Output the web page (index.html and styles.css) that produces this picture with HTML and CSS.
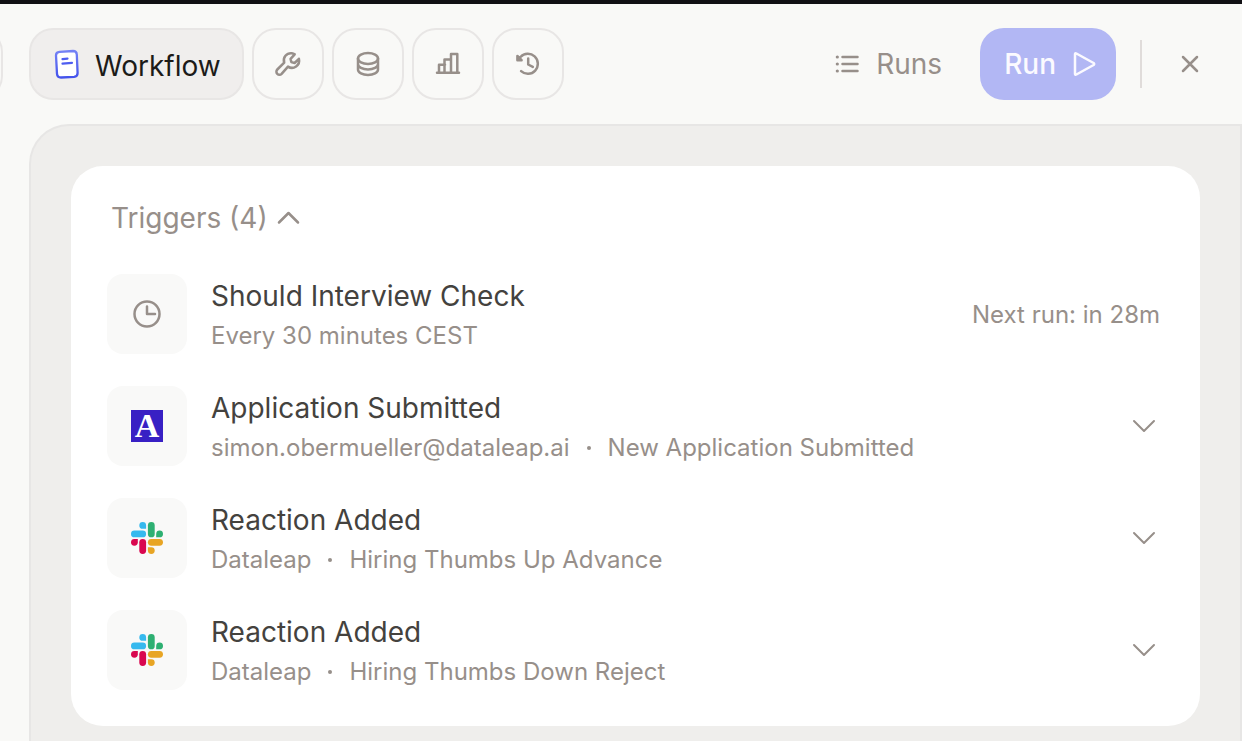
FILE: index.html
```html
<!DOCTYPE html>
<html lang="en">
<head>
<meta charset="utf-8">
<title>Workflow</title>
<link rel="stylesheet" href="styles.css">
</head>
<body>
<svg class="defs" width="0" height="0" aria-hidden="true">
  <symbol id="chevron" viewBox="0 0 24 24"><path d="M2 7 12 17 22 7"/></symbol>
  <symbol id="slack" viewBox="0 0 32 32">
    <g fill="#36b9ee"><path d="M11.700 0a3.400 3.400 0 0 1 3.400 3.400v3.400h-3.400a3.400 3.400 0 0 1 0-6.800z"/><rect y="8.500" width="15.100" height="6.800" rx="3.400"/></g>
    <g fill="#2eb072"><rect x="16.900" width="6.800" height="15.300" rx="3.400"/><path d="M32 11.900a3.400 3.400 0 0 1-3.400 3.400h-3.400v-3.400a3.400 3.400 0 0 1 6.800 0z"/></g>
    <g fill="#e8a524"><rect x="16.900" y="16.900" width="15.100" height="6.800" rx="3.400"/><path d="M20.300 32a3.400 3.400 0 0 1-3.400-3.400v-3.400h3.400a3.400 3.400 0 0 1 0 6.800z"/></g>
    <g fill="#d9074f"><rect x="8.300" y="16.900" width="6.800" height="15.100" rx="3.400"/><path d="M0 20.300a3.400 3.400 0 0 1 3.400-3.400h3.400v3.400a3.400 3.400 0 0 1-6.800 0z"/></g>
  </symbol>
</svg>
<header class="topbar">
  <div class="peek"><button class="tab" type="button" aria-label="Previous"></button></div>
  <nav class="tabs">
    <button class="tab tab-active" type="button">
      <svg class="doc-icon" width="28" height="32" viewBox="0 0 28 32">
        <defs><linearGradient id="ink" x1="0" y1="0" x2="0" y2="1"><stop offset="0" stop-color="#7482f5"/><stop offset="1" stop-color="#4453ec"/></linearGradient></defs>
        <path d="M6.500 3.800 20 3q3.600 0 3.800 3.500L24.600 25q0 3.500-3.500 3.800L8 29.500q-3.700 0-4-3.600L3 7.500q0-3.500 3.500-3.700z" fill="#fff" stroke="url(#ink)" stroke-width="2.300"/>
        <path d="M9.500 11.200 14.500 10.700M9.500 15.600 19 14.900" fill="none" stroke="#4e5df0" stroke-width="2.200" stroke-linecap="round"/>
      </svg>
      <span>Workflow</span>
    </button>
    <button class="tab" type="button" aria-label="Tools">
      <svg class="line" width="28" height="28" viewBox="0 0 28 28"><path d="M17.800 3.200a7.200 7.200 0 0 0-7.600 9.400L3.300 19.500a3 3 0 0 0 4.300 4.300l6.400-7.200a7.200 7.200 0 0 0 10.900-7.800L20.600 13l-3.300-.9-.7-3.200 4.100-4.600a7.200 7.200 0 0 0-2.900-1.100z"/></svg>
    </button>
    <button class="tab" type="button" aria-label="Data">
      <svg class="line" width="28" height="28" viewBox="0 0 28 28"><ellipse cx="14" cy="8.500" rx="10" ry="5.500"/><path d="M4 8.500v11c0 3 4.500 5.500 10 5.500s10-2.500 10-5.500v-11M4 14c0 3 4.500 5.500 10 5.500s10-2.500 10-5.500"/></svg>
    </button>
    <button class="tab" type="button" aria-label="Statistics">
      <svg class="line" width="28" height="28" viewBox="0 0 28 28"><path d="M3 22.800h22M5 22.800v-8h6M10.500 22.800V9.500h6.500M17 22.800V4h6.300v18.800"/></svg>
    </button>
    <button class="tab" type="button" aria-label="History">
      <svg class="line" width="28" height="28" viewBox="0 0 28 28"><path d="M3.400 6v4.200h4.200zM4 9.800 6.500 7a10 10 0 1 1 .6 14.200M14.200 8.500v6l4.600 2.400"/></svg>
    </button>
  </nav>
  <div class="actions">
    <button class="runs" type="button">
      <svg class="line" width="28" height="28" viewBox="0 0 28 28"><path d="M9.500 7h15M9.500 14h15M9.500 21h15"/><path d="M4.300 7h.02M4.300 14h.02M4.300 21h.02" stroke-width="3.200"/></svg>
      <span>Runs</span>
    </button>
    <button class="run" type="button">
      <span>Run</span>
      <svg class="line" width="28" height="28" viewBox="0 0 28 28"><path d="M5 4.300v19.400q0 1.500 1.400.8L23.600 15q1.200-1 0-2L6.400 3.500Q5 2.800 5 4.300z"/></svg>
    </button>
    <span class="divider"></span>
    <button class="close" type="button" aria-label="Close">
      <svg class="line" width="28" height="28" viewBox="0 0 28 28"><path d="M7 7l14 14M21 7 7 21"/></svg>
    </button>
  </div>
</header>
<main class="panel">
  <section class="card">
    <button class="heading" type="button" aria-expanded="true">
      <span>Triggers (4)</span>
      <svg class="line" width="24" height="24" viewBox="0 0 24 24"><path d="M3 16.500 12.500 7l9.500 9.500"/></svg>
    </button>
    <ul class="list">
      <li class="row">
        <span class="tile"><svg class="line" width="32" height="32" viewBox="0 0 32 32"><circle cx="16" cy="16" r="12.500"/><path d="M16 8.500V16h8"/></svg></span>
        <div class="info"><h2 class="title">Should Interview Check</h2><p class="sub">Every 30 minutes CEST</p></div>
        <span class="next">Next run: in 28m</span>
      </li>
      <li class="row">
        <span class="tile"><span class="ashby">A</span></span>
        <div class="info"><h2 class="title">Application Submitted</h2><p class="sub"><span>simon.obermueller@dataleap.ai</span><i class="dot"></i><span>New Application Submitted</span></p></div>
        <button class="expand" type="button" aria-label="Expand"><svg class="line thin" width="24" height="24"><use href="#chevron"/></svg></button>
      </li>
      <li class="row">
        <span class="tile"><svg width="32" height="32"><use href="#slack"/></svg></span>
        <div class="info"><h2 class="title">Reaction Added</h2><p class="sub"><span>Dataleap</span><i class="dot"></i><span>Hiring Thumbs Up Advance</span></p></div>
        <button class="expand" type="button" aria-label="Expand"><svg class="line thin" width="24" height="24"><use href="#chevron"/></svg></button>
      </li>
      <li class="row">
        <span class="tile"><svg width="32" height="32"><use href="#slack"/></svg></span>
        <div class="info"><h2 class="title">Reaction Added</h2><p class="sub"><span>Dataleap</span><i class="dot"></i><span>Hiring Thumbs Down Reject</span></p></div>
        <button class="expand" type="button" aria-label="Expand"><svg class="line thin" width="24" height="24"><use href="#chevron"/></svg></button>
      </li>
    </ul>
  </section>
</main>
</body>
</html>
```
FILE: styles.css
```css
* { box-sizing: border-box; margin: 0; padding: 0; }
body {
  min-height: 100vh;
  display: flex;
  flex-direction: column;
  border-top: 4px solid #111014;
  background: #f9f9f7;
  color: #1c1b19;
  font-family: Inter, "Liberation Sans", Arial, sans-serif;
  font-size: 28px;
}
button { border: 0; background: none; font: inherit; color: inherit; cursor: pointer; }
svg { display: block; flex: none; }
.defs { position: absolute; }
.line { fill: none; stroke: currentColor; stroke-width: 2.5; stroke-linecap: round; stroke-linejoin: round; }
.thin { stroke-width: 2; }
.topbar { display: flex; align-items: center; padding: 24px 24px 24px 0; }
.peek { display: flex; justify-content: flex-end; width: 3px; margin-right: 26px; overflow: hidden; }
.tabs { display: flex; gap: 8px; }
.tab {
  flex: none;
  display: flex;
  align-items: center;
  justify-content: center;
  width: 72px;
  height: 72px;
  border: 2px solid #e8e6e5;
  border-radius: 24px;
  color: #978f8a;
}
.tab-active { width: auto; gap: 14px; padding: 4px 21px 0 22px; background: #f0eeed; color: #1c1b19; }
.doc-icon { margin-bottom: 4px; }
.actions { display: flex; align-items: center; margin-left: auto; color: #978f8a; }
.runs { display: flex; align-items: center; gap: 15px; margin-right: 38px; }
.run {
  display: flex;
  align-items: center;
  gap: 14px;
  height: 72px;
  padding: 0 18px 0 24px;
  border-radius: 24px;
  background: #b2b7f4;
  color: #fbfaff;
  font-weight: 500;
}
.divider { width: 2px; height: 48px; margin: 0 20px 0 24px; background: #e0dcda; }
.close { display: flex; align-items: center; justify-content: center; width: 56px; height: 56px; }
.panel {
  flex: 1;
  margin-left: 29px;
  padding: 40px 40px 0;
  border: 2px solid #e7e6e5;
  border-bottom: 0;
  border-top-left-radius: 40px;
  background: #efeeec;
}
.card { padding: 36px 40px 36px 36px; border-radius: 32px; background: #fff; }
.heading { display: flex; align-items: center; gap: 8px; margin: 0 0 40px 4px; line-height: 32px; color: #978f8a; }
.list { display: flex; flex-direction: column; gap: 32px; list-style: none; }
.row { display: flex; align-items: center; }
.tile {
  flex: none;
  display: flex;
  align-items: center;
  justify-content: center;
  width: 80px;
  height: 80px;
  margin-right: 24px;
  border-radius: 16px;
  background: #f9f9f8;
  color: #978f8a;
}
.ashby {
  width: 32px;
  height: 32px;
  background: #3820c4;
  color: #fff;
  font: bold 34px/32px "Liberation Serif", serif;
  text-align: center;
}
.info { flex: 1; }
.title { font-size: 28px; font-weight: 400; line-height: 44px; color: #44423e; }
.sub { display: flex; align-items: center; font-size: 24px; line-height: 36px; color: #978f8a; }
.dot { width: 4px; height: 4px; margin: 0 17px; border-radius: 50%; background: #978f8a; }
.next { font-size: 24px; color: #978f8a; }
.expand { display: flex; padding: 4px; color: #978f8a; }
```
